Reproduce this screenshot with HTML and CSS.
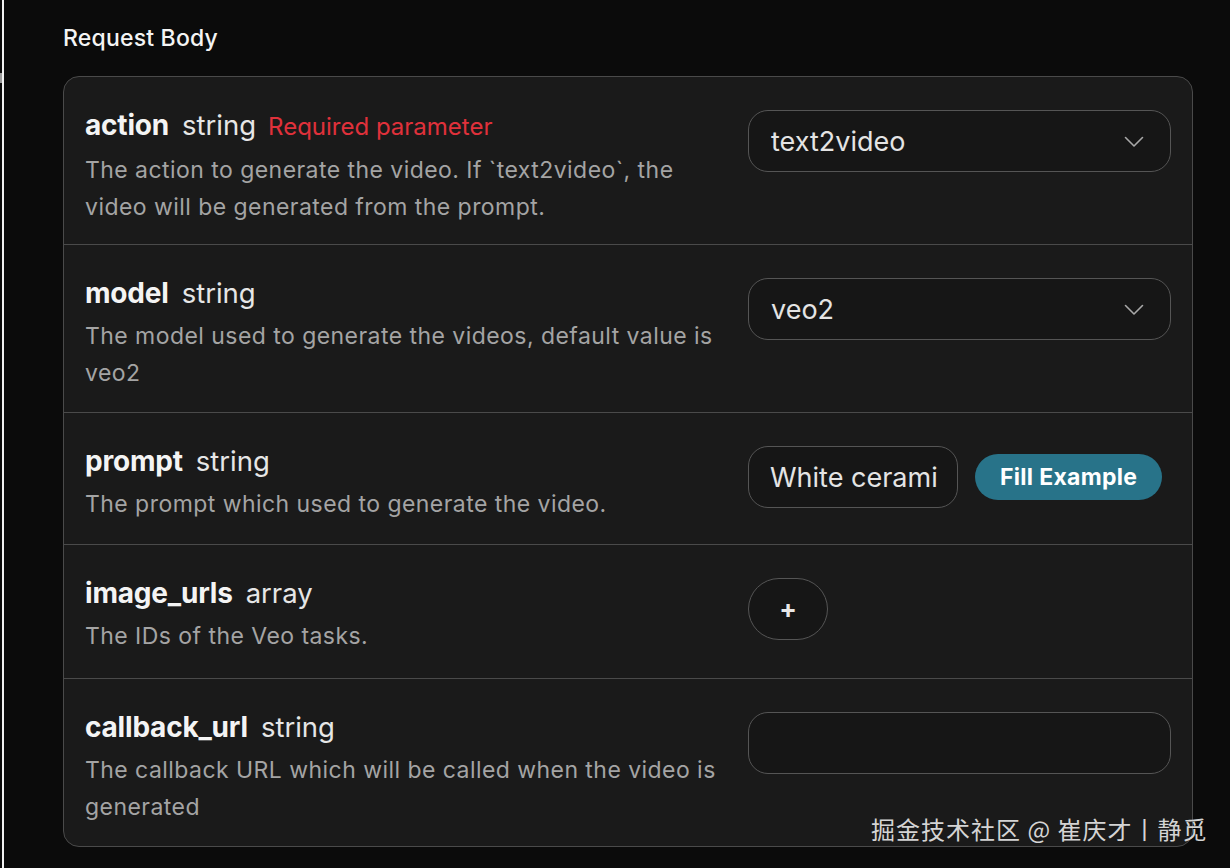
FILE: index.html
```html
<!DOCTYPE html>
<html lang="en">
<head>
<meta charset="utf-8">
<title>Request Body</title>
<link rel="stylesheet" href="styles.css">
</head>
<body>
<div class="app">
  <div class="edge"><span class="edge-mark"></span></div>
  <main class="main">
    <h2 class="section-title">Request Body</h2>
    <div class="card">
      <div class="row">
        <div class="info">
          <div class="title"><span class="name">action</span><span class="type">string</span><span class="required">Required parameter</span></div>
          <p class="desc">The action to generate the video. If `text2video`, the video will be generated from the prompt.</p>
        </div>
        <div class="control">
          <div class="field select"><span class="value">text2video</span>
            <svg class="chevron" width="20" height="12" viewBox="0 0 20 12"><path d="M1.5 1.5 L10 10 L18.5 1.5" fill="none" stroke="#a8a8a8" stroke-width="1.6" stroke-linecap="round" stroke-linejoin="round"/></svg>
          </div>
        </div>
      </div>
      <div class="row">
        <div class="info">
          <div class="title"><span class="name">model</span><span class="type">string</span></div>
          <p class="desc">The model used to generate the videos, default value is veo2</p>
        </div>
        <div class="control">
          <div class="field select"><span class="value">veo2</span>
            <svg class="chevron" width="20" height="12" viewBox="0 0 20 12"><path d="M1.5 1.5 L10 10 L18.5 1.5" fill="none" stroke="#a8a8a8" stroke-width="1.6" stroke-linecap="round" stroke-linejoin="round"/></svg>
          </div>
        </div>
      </div>
      <div class="row row-single">
        <div class="info">
          <div class="title"><span class="name">prompt</span><span class="type">string</span></div>
          <p class="desc">The prompt which used to generate the video.</p>
        </div>
        <div class="control inline">
          <div class="field short"><span class="value clip">White cerami</span></div>
          <button class="fill-btn">Fill Example</button>
        </div>
      </div>
      <div class="row row-array">
        <div class="info">
          <div class="title"><span class="name">image_urls</span><span class="type">array</span></div>
          <p class="desc">The IDs of the Veo tasks.</p>
        </div>
        <div class="control">
          <button class="add-btn">+</button>
        </div>
      </div>
      <div class="row">
        <div class="info">
          <div class="title"><span class="name">callback_url</span><span class="type">string</span></div>
          <p class="desc">The callback URL which will be called when the video is generated</p>
        </div>
        <div class="control">
          <div class="field"></div>
        </div>
      </div>
    </div>
  </main>
</div>
<div class="watermark">掘金技术社区 @ 崔庆才丨静觅</div>
</body>
</html>
```

FILE: styles.css
```css
* { box-sizing: border-box; }
html, body { margin: 0; padding: 0; }
body {
  background: #0b0b0b;
  font-family: Inter, "Noto Sans", "Noto Sans CJK SC", sans-serif;
  color: #f0f0f0;
  width: 1230px;
  height: 868px;
  overflow: hidden;
  position: relative;
}
.app { display: flex; height: 868px; }
.edge {
  width: 4px;
  flex: none;
  border-right: 2px solid #f2f2f2;
  position: relative;
}
.edge-mark {
  position: absolute;
  left: 0;
  top: 73px;
  width: 2px;
  height: 10px;
  background: #9a9a9a;
}
.main {
  flex: 1;
  padding-left: 59px;
  padding-right: 37px;
}
.section-title {
  margin: 0;
  font-size: 23px;
  font-weight: 500;
  line-height: 28px;
  padding-top: 24px;
  color: #f4f4f4;
  letter-spacing: 0.2px;
}
.card {
  margin-top: 24px;
  width: 1130px;
  background: #1a1a1a;
  border: 1px solid #4a4a4a;
  border-radius: 16px;
}
.row {
  display: grid;
  grid-template-columns: 1fr 423px;
  column-gap: 24px;
  padding: 29px 21px 20px;
  border-top: 1px solid #4a4a4a;
}
.row:first-child { border-top: none; padding-bottom: 18px; }
.row-single { padding-bottom: 21px; }
.row-array { padding-bottom: 23px; }
.title {
  display: flex;
  align-items: baseline;
  gap: 13px;
  line-height: 38px;
}
.name {
  font-size: 28px;
  font-weight: 700;
  color: #f4f4f4;
  letter-spacing: -0.2px;
}
.type {
  font-size: 27.5px;
  font-weight: 400;
  color: #e6e6e6;
}
.required {
  font-size: 24px;
  color: #e0313b;
  margin-left: -1px;
}
.desc {
  margin: 6px 0 0;
  font-size: 23px;
  line-height: 37px;
  color: #a4a4a4;
  letter-spacing: 0.45px;
}
.control {
  padding-top: 4px;
}
.control.inline {
  display: flex;
  align-items: center;
  gap: 17px;
  align-self: start;
}
.field {
  height: 62px;
  border: 1.5px solid #555555;
  border-radius: 20px;
  background: #161616;
  display: flex;
  align-items: center;
  padding: 0 21px 0 22px;
  font-size: 27px;
  color: #e4e4e4;
}
.select { justify-content: space-between; padding-right: 26px; }
.chevron { display: block; margin-top: 1px; }
.short { width: 210px; padding: 0 19px 0 21px; }
.clip { white-space: nowrap; overflow: hidden; display: block; width: 100%; }
.fill-btn {
  height: 46px;
  padding: 0 25px;
  border: none;
  border-radius: 23px;
  background: #287389;
  color: #ffffff;
  font-family: inherit;
  font-size: 23px;
  font-weight: 700;
  letter-spacing: 0.3px;
}
.add-btn {
  width: 80px;
  height: 62px;
  border: 1.5px solid #555555;
  border-radius: 31px;
  background: #161616;
  color: #e8e8e8;
  font-family: inherit;
  font-size: 26px;
  font-weight: 700;
  line-height: 1;
  padding: 0 0 1px;
}
.watermark {
  position: absolute;
  left: 871px;
  top: 813px;
  font-family: "Noto Sans CJK SC", sans-serif;
  font-size: 24px;
  line-height: 32px;
  color: #d4d4d4;
  letter-spacing: 1px;
}
```
